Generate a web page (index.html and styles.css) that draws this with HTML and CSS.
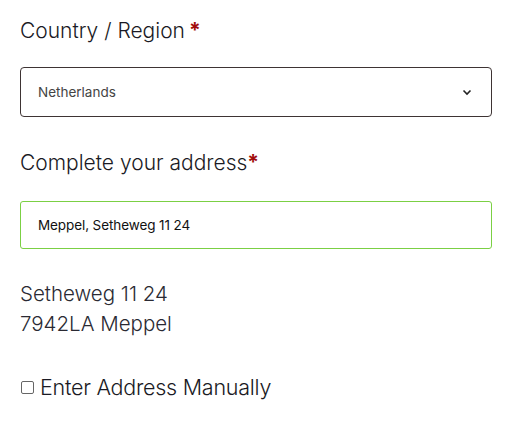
FILE: index.html
```html
<!DOCTYPE html>
<html>
<head>
<meta charset="utf-8">
<link rel="stylesheet" href="styles.css">
</head>
<body>
<form class="form">
  <div class="field">
    <label class="label">Country / Region<span class="req req-spaced">*</span></label>
    <div class="select">
      <span class="select-value">Netherlands</span>
      <svg class="chev" width="10" height="7" viewBox="0 0 10 7"><path d="M1.5 1.5 L5 5 L8.5 1.5" fill="none" stroke="#222" stroke-width="1.6"/></svg>
    </div>
  </div>
  <div class="field">
    <label class="label">Complete your address<span class="req">*</span></label>
    <div class="input">Meppel, Setheweg 11 24</div>
  </div>
  <div class="address">
    <div>Setheweg 11 24</div>
    <div>7942LA Meppel</div>
  </div>
  <label class="check">
    <span class="box"></span>
    <span>Enter Address Manually</span>
  </label>
</form>
</body>
</html>
```
FILE: styles.css
```css
html, body { margin: 0; padding: 0; background: #fff; }
body { font-family: Inter, "Noto Sans", sans-serif; color: #1d1d26; }
.form { padding: 16px 20px 0 20px; width: 472px; display: flex; flex-direction: column; }
.field { display: flex; flex-direction: column; }
.label { font-size: 21px; font-weight: 300; letter-spacing: 0; line-height: 30px; color: #1a1a24; }
.req { color: #a10c0c; font-weight: 700; }
.req-spaced { margin-left: 4px; }
.select {
  margin-top: 21px; height: 48px; border: 1px solid #3e3434; border-radius: 4px;
  display: flex; align-items: center; justify-content: space-between;
  padding: 0 19px 0 17px;
}
.select-value { font-size: 13.5px; color: #444; font-weight: 400; }
.chev { display: block; }
.field + .field { margin-top: 31px; }
.input {
  margin-top: 23px; height: 46px; border: 1px solid #7bd044; border-radius: 3px;
  display: flex; align-items: center; padding: 0 17px;
  font-size: 13.5px; color: #111; font-weight: 400; letter-spacing: -0.1px;
}
.address { margin-top: 30px; font-size: 20.5px; font-weight: 300; line-height: 30px; color: #2a2a33; letter-spacing: 0; }
.check { margin-top: 35px; display: flex; align-items: center; gap: 6px; font-size: 21.5px; font-weight: 300; color: #1a1a24; letter-spacing: -0.25px; }
.box { width: 11px; height: 11px; border: 1px solid #666; border-radius: 2px; margin-left: 1px; }
```
